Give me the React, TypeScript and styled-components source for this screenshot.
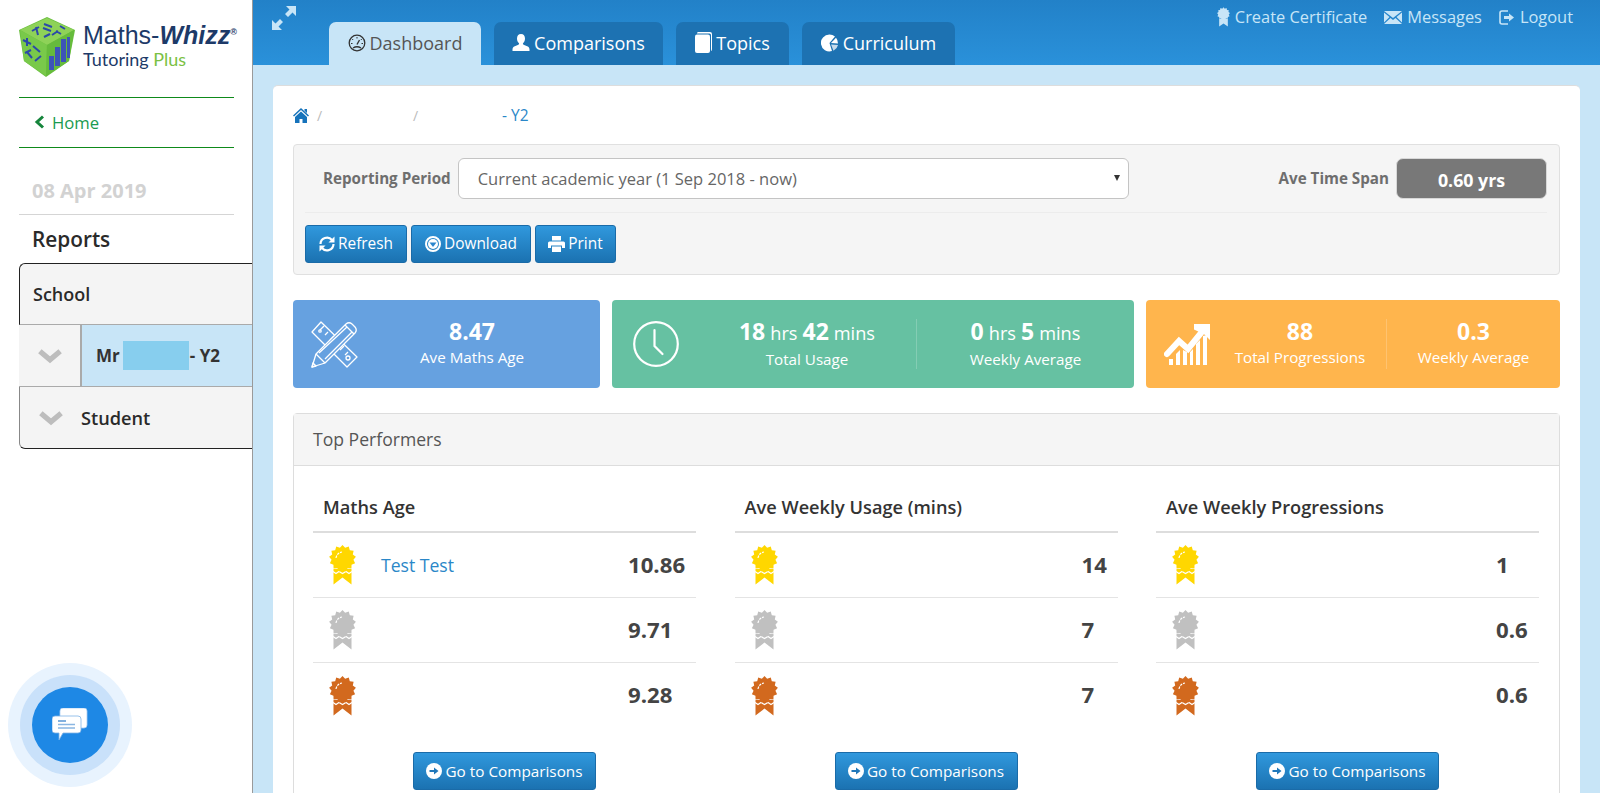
import React from "react";
import styled, { createGlobalStyle } from "styled-components";

const Global = createGlobalStyle`
  html, body { margin: 0; padding: 0; height: 100%; overflow: hidden; background: #fff; }
  body { font-family: "Open Sans", "Liberation Sans", sans-serif; color: #444; }
  #root { height: 100%; }
  * { box-sizing: border-box; }
  svg { flex: none; }
`;

const Page = styled.div`display: flex; height: 793px; overflow: hidden; position: relative;`;

/* ---------- Sidebar ---------- */
const Sidebar = styled.aside`width: 253px; flex: none; border-right: 1px solid #9a9a9a; padding: 17px 0 0 19px; background: #fff;`;
const LogoRow = styled.div`display: flex; gap: 8px; height: 80px;`;
const LogoText = styled.div`display: flex; flex-direction: column; padding-top: 4px;`;
const LogoName = styled.div`font-family: "Liberation Sans", sans-serif; font-size: 25px; line-height: 28px; color: #1d3a68; white-space: nowrap; sup { font-size: 9px; vertical-align: 9px; line-height: 0; font-weight: 700; }`;
const LogoWhizz = styled.b`font-style: italic; font-weight: 700;`;
const LogoSub = styled.div`font-family: "Lato", sans-serif; font-size: 18px; line-height: 20px; font-weight: 400; color: #1d3a68; span { color: #7ac143; }`;
const HomeLink = styled.div`width: 215px; height: 51px; border-top: 1px solid #0e8a1a; border-bottom: 1px solid #0e8a1a; display: flex; align-items: center; gap: 7px; padding: 0 0 1px 15px; color: #1a9a50; font-size: 16.7px;`;
const DateText = styled.div`width: 215px; height: 67px; padding: 30px 0 0 13px; font-size: 20px; line-height: 26px; font-weight: 700; color: #d2d2d2; border-bottom: 1.5px solid #d5d5d5;`;
const ReportsTitle = styled.div`height: 48px; padding: 11px 0 0 13px; font-size: 20.8px; line-height: 26px; font-weight: 600; color: #2a2a2a;`;
const TreeHead = styled.div`height: 62px; background: #f4f4f4; border: 1px solid #222; border-right: 0; border-bottom: 1px solid #aaa; border-radius: 6px 0 0 0; padding: 0 0 0 13px; display: flex; align-items: center; font-size: 18px; font-weight: 600; color: #2a2a2a;`;
const TreeRow = styled.div`height: 62px; display: flex; background: #c8e5f7;`;
const ChevCell = styled.div`width: 63px; flex: none; background: #f4f4f4; border-right: 2px solid #aaa; border-bottom: 1px solid #aaa; display: flex; align-items: center; justify-content: center;`;
const TreeLabel = styled.div`flex: 1; display: flex; align-items: center; padding-left: 14px; font-size: 17px; font-weight: 700; color: #333; border-bottom: 1px solid #aaa;`;
const Redact = styled.span`display: inline-block; width: 66px; height: 29px; margin: 0 1px 0 3px; background: #87ceee;`;
const TreeFoot = styled.div`height: 62px; background: #f4f4f4; border-left: 1px solid #888; border-bottom: 1px solid #222; border-radius: 0 0 0 6px; display: flex; align-items: center; gap: 17px; padding-left: 18px; font-size: 18.2px; font-weight: 600; color: #2a2a2a;`;

const ChatOuter = styled.div`position: absolute; left: 8px; top: 663px; width: 124px; height: 124px; border-radius: 50%; background: #e8f3fe; display: flex; align-items: center; justify-content: center;`;
const ChatMid = styled.div`width: 100px; height: 100px; border-radius: 50%; background: #c9e1fa; display: flex; align-items: center; justify-content: center;`;
const ChatInner = styled.div`width: 76px; height: 76px; border-radius: 50%; background: #1e88e5; display: flex; align-items: center; justify-content: center;`;

/* ---------- Main ---------- */
const Main = styled.main`flex: 1; min-width: 0; background: #c8e5f7; display: flex; flex-direction: column;`;
const Header = styled.header`height: 65px; flex: none; background: linear-gradient(#2281c8, #2a91da); display: flex; padding-left: 19px;`;
const ExpandBox = styled.div`width: 57px; flex: none; padding-top: 6px;`;
const Tabs = styled.nav`display: flex; align-items: flex-end; gap: 13px; height: 65px;`;
const Tab = styled.div<{ $active?: boolean; $w: number }>`
  width: ${p => p.$w}px; height: 43px; border-radius: 7px 7px 0 0; display: flex; align-items: center; justify-content: center; gap: 4px;
  font-size: 18px; padding-bottom: 2px;
  background: ${p => (p.$active ? "#c8e5f7" : "#1d72b2")};
  color: ${p => (p.$active ? "#555" : "#fff")};
`;
const TopLinks = styled.div`margin-left: auto; display: flex; gap: 17px; padding: 6px 27px 0 0; color: #c8e5f7; font-size: 16.4px; line-height: 22px;`;
const TopLink = styled.span`display: flex; align-items: center; gap: 5px; white-space: nowrap; height: 22px;`;

const Card = styled.section`margin: 20px 20px 0 20px; background: #fff; border-radius: 5px 5px 0 0; border-top: 1px solid #ddd; padding: 0 20px; flex: 1;`;
const Crumbs = styled.div`height: 58px; display: flex; align-items: center; font-size: 15.500px; color: #2a87c8;`;
const CrumbSep = styled.span<{ $w: number; $ml?: number }>`color: #bbb; width: ${p => p.$w}px; margin-left: ${p => p.$ml ?? 0}px; font-size: 14px;`;

const Well = styled.div`height: 131px; background: #f5f5f5; border: 1.5px solid #e0e0e0; border-radius: 4px; padding: 13px 12px 0 11px;`;
const WellTop = styled.div`display: flex; align-items: center; height: 41px; padding-left: 18px;`;
const FieldLabel = styled.span`font-size: 15.2px; font-weight: 700; color: #6e6e6e; white-space: nowrap; padding-bottom: 1px;`;
const SelectWrap = styled.div`position: relative; width: 671px; margin-left: 7px; height: 41px;`;
const Select = styled.select`width: 100%; height: 100%; appearance: none; border: 1.5px solid #c4c4c4; border-radius: 6px; background: #fff; padding: 0 0 0 19px; font-family: inherit; font-size: 16.5px; color: #666;`;
const Caret = styled.span`position: absolute; right: 9px; top: 17px; width: 0; height: 0; border-left: 3.5px solid transparent; border-right: 3.5px solid transparent; border-top: 6px solid #333;`;
const SpanLabel = styled(FieldLabel)`margin-left: auto; margin-right: 7px;`;
const Pill = styled.div`width: 151px; height: 41px; border-radius: 7px; background: #787878; border: 1.5px solid #d8d8d8; padding-top: 2px; color: #fff; font-size: 17.8px; font-weight: 700; display: flex; align-items: center; justify-content: center;`;
const Rule = styled.div`height: 1px; background: #ececec; margin: 13px 0 12px;`;
const Btns = styled.div`display: flex; gap: 4px;`;
const Btn = styled.div<{ $w: number }>`
  width: ${p => p.$w}px; height: 38px; border-radius: 3px; border: 1px solid #1a6ba8; padding-bottom: 1px;
  background: linear-gradient(#3098dd, #1b72b1); color: #fff; font-size: 15.4px;
  display: flex; align-items: center; justify-content: center; gap: 3px;
`;

const Stats = styled.div`display: flex; gap: 12px; margin-top: 25px; height: 88px;`;
const Stat = styled.div<{ $bg: string; $w: number; $iconW: number }>`
  width: ${p => p.$w}px; flex: none; background: ${p => p.$bg}; border-radius: 4px; color: #fff; display: grid;
  grid-template-columns: ${p => p.$iconW}px 1fr; align-items: center;
`;
const StatIcon = styled.div<{ $pad: number }>`padding-left: ${p => p.$pad}px; display: flex; align-items: center;`;
const StatCells = styled.div`display: flex; align-items: center; height: 50px;`;
const StatCell = styled.div<{ $w?: number }>`
  flex: ${p => (p.$w ? `0 0 ${p.$w}px` : 1)}; text-align: center; height: 50px;
  & + & { border-left: 1px solid rgba(255,255,255,.2); }
`;
const StatNum = styled.div`font-size: 23px; line-height: 28px; margin: -2px 0 2px; font-weight: 700; white-space: nowrap; word-spacing: -1px; small { font-size: 18.2px; font-weight: 400; }`;
const StatLabel = styled.div`font-size: 15.2px; line-height: 21px; white-space: nowrap;`;

const Panel = styled.div`margin-top: 25px; border: 1px solid #ddd; border-radius: 4px 4px 0 0; height: 420px;`;
const PanelHead = styled.div`height: 52px; background: #f5f5f5; border-bottom: 1px solid #ddd; padding: 0 0 1px 19px; display: flex; align-items: center; font-size: 17.6px; color: #555;`;
const Columns = styled.div`display: grid; grid-template-columns: repeat(3, 383px); column-gap: 38.5px; padding: 25px 0 0 19px;`;
const Col = styled.div``;
const ColTitle = styled.div`height: 42px; border-bottom: 2px solid #ddd; padding: 3px 0 0 10px; font-size: 18.2px; line-height: 26px; font-weight: 600; color: #333; white-space: nowrap;`;
const Row = styled.div`height: 65px; display: flex; align-items: center; border-bottom: 1px solid #e4e4e4; padding-left: 16px; &:nth-child(4) { border-bottom: 0; }`;
const RowName = styled.span`flex: 1; padding-left: 25px; font-size: 17.6px; color: #2a87c8;`;
const RowValue = styled.span<{ $w: number }>`width: ${p => p.$w}px; margin-right: 11px; padding-bottom: 2px; font-size: 22.2px; font-weight: 700; color: #444; white-space: nowrap;`;
const GoWrap = styled.div`display: flex; justify-content: center; padding-top: 24px;`;
const GoBtn = styled(Btn)`font-size: 15.3px;`;

/* ---------- Icons ---------- */
const CubeLogo = () => (
  <svg width="56" height="60" viewBox="0 0 56 60">
    <path d="M28 0 56 13 50 44 27 60 5 44 0 13Z" fill="#6abf3f" />
    <path d="M28 1 55 13 28 28 1 13Z" fill="#8ed258" />
    <path d="M1 13 28 28 27 59 5 44Z" fill="#79c94a" />
    <path d="M55 13 28 28 27 59 50 44Z" fill="#66bb3c" />
    <g stroke="#2c4aa8" strokeWidth="2" fill="none">
      <path d="M13 14l7-4M17 10l2 8M25 7l8 3M24 11l8 3M33 18l6-4M37 14l5 3M41 9l5 3M25 20l6-3" />
      <path d="M4 23l8 4M8 21v8M14 29l7 6M6 36l6-3M8 35l5 6M16 44l6-5" />
    </g>
    <g fill="#3d55b8">
      <rect x="30" y="39" width="5" height="14" />
      <rect x="36" y="30" width="5" height="19" />
      <rect x="42" y="22" width="5" height="23" />
      <rect x="48" y="20" width="3" height="21" />
    </g>
  </svg>
);
const ChevLeft = () => (
  <svg width="11" height="14" viewBox="0 0 11 14"><path d="M9 1.500 3 7l6 5.500" fill="none" stroke="#16853c" strokeWidth="3" /></svg>
);
const ChevDown = () => (
  <svg width="26" height="16" viewBox="0 0 24 15"><path d="M2.500 3 12 11l9.500-8" fill="none" stroke="#bdbdbd" strokeWidth="5" /></svg>
);
const Chat = () => (
  <svg width="36" height="34" viewBox="0 0 36 34">
    <path d="M8 3q0-3 3-3h21q3 0 3 3v14q0 3-3 3H8Z" fill="#fff" stroke="#a9cdf2" strokeWidth=".8" />
    <path d="M3 8h23q3 0 3 3v11q0 3-3 3H11l-4 7v-7H3q-3 0-3-3V11q0-3 3-3Z" fill="#fff" stroke="#7fb2e6" strokeWidth=".8" />
    <path d="M6 13h8" stroke="#4c8fd0" strokeWidth="1.400" />
    <path d="M6 16.500h17M6 20h17" stroke="#8ab6e2" strokeWidth="1.400" />
  </svg>
);
const Expand = () => (
  <svg width="24" height="24" viewBox="0 0 24 24" fill="#c8e5f7">
    <path d="M14 0h10v10l-3.500-3.500L16 11l-3-3 4.500-4.500Z" />
    <path d="M0 24V14l3.500 3.500L8 13l3 3-4.500 4.500L10 24Z" />
  </svg>
);
const Gauge = () => (
  <svg width="18" height="18" viewBox="0 0 18 18" fill="none" stroke="#333">
    <circle cx="9" cy="9" r="7.800" strokeWidth="1.300" />
    <path d="M9 3v1.500M4.200 5l1 1M13.800 5l-1 1M3 9.500h1.500M15 9.500h-1.500" strokeWidth="1" />
    <path d="M9 10.500 11.500 6" strokeWidth="1.400" />
    <path d="M5 14q4-2.500 8 0" strokeWidth="1.300" />
  </svg>
);
const User = () => (
  <svg width="18" height="18" viewBox="0 0 18 18" fill="#fff">
    <path d="M9 0c2.700 0 4 1.800 4 4.500 0 2-.8 3.500-1.800 4.600-.5.600-.3 1.300.4 1.600l3.600 1.600c1.600.7 2.300 1.700 2.300 3.200V17H.5v-1.500c0-1.500.7-2.500 2.300-3.200l3.600-1.600c.7-.3.900-1 .4-1.600C5.800 8 5 6.500 5 4.500 5 1.800 6.300 0 9 0Z" />
  </svg>
);
const Book = () => (
  <svg width="17" height="21" viewBox="0 0 17 21">
    <path d="M3 0h12q2 0 2 2v15q0 2-1 2V3q0-1.500-1.500-1.500H2Q2 0 3 0Z" fill="#fff" />
    <path d="M2 2.500h11q2 0 2 2V19q0 2-2 2H2q-2 0-2-2V4.500q0-2 2-2Z" fill="#fff" />
  </svg>
);
const Pie = () => (
  <svg width="18" height="18" viewBox="0 0 18 18" fill="#fff">
    <path d="M8.500.5A8.500 8.500 0 1 0 11 17.100L8.500 9l5.500-6.500A8.500 8.500 0 0 0 8.500.5Z" />
    <path d="M15 3.800A8.500 8.500 0 0 1 17 9.500L10 9Z" />
    <path d="M17 11A8.500 8.500 0 0 1 12.500 16.700L10 10.500Z" opacity=".75" />
  </svg>
);
const sealPath = (cx: number, cy: number, ro: number, ri: number, n: number) => {
  const pts: string[] = [];
  for (let i = 0; i < n * 2; i++) {
    const r = i % 2 ? ri : ro;
    const a = (Math.PI * i) / n - Math.PI / 2;
    pts.push(`${(cx + r * Math.cos(a)).toFixed(2)} ${(cy + r * Math.sin(a)).toFixed(2)}`);
  }
  return `M${pts.join("L")}Z`;
};
const Medal = ({ color }: { color: string }) => (
  <svg width="27" height="40" viewBox="0 0 27 40">
    <path d="M4.500 24H22.500V39.500L13.500 32.500 4.500 39.500Z" fill={color} />
    <path d="M4 26.500l3 2 3-2 3.500 2 3.500-2 3 2 3-2" fill="none" stroke="#fff" strokeWidth="1.200" />
    <path d={sealPath(13.5, 13.5, 13.5, 11, 13)} fill={color} />
    <path d="M7 13q1-5 6-6" fill="none" stroke="#fff" strokeWidth="1.200" strokeDasharray="2.500 1" />
  </svg>
);
const CertIcon = () => (
  <svg width="13" height="20" viewBox="0 0 27 40"><path d="M4.500 24H22.500V39.500L13.500 33.500 4.500 39.500Z" fill="#c8e5f7" /><path d={sealPath(13.5, 13.5, 13.5, 11, 13)} fill="#c8e5f7" /></svg>
);
const Mail = () => (
  <svg width="18" height="13" viewBox="0 0 18 13" fill="#c8e5f7">
    <path d="M0 0h18L9 7Z" /><path d="M0 1.500 5.500 6 0 11.500ZM18 1.500 12.500 6 18 11.500ZM6.500 7 9 9l2.500-2L18 13H0Z" />
  </svg>
);
const Logout = () => (
  <svg width="16" height="15" viewBox="0 0 16 15" fill="none" stroke="#c8e5f7" strokeWidth="1.600">
    <path d="M9 1H3Q1 1 1 3v9q0 2 2 2h6" />
    <path d="M5 6h5V3.500L15 7.500l-5 4V9H5Z" fill="#c8e5f7" stroke="none" />
  </svg>
);
const Home = () => (
  <svg width="16" height="15" viewBox="0 0 16 15" fill="#1673bb">
    <path d="M8 0 16 7.500l-1 1L8 2 1 8.500l-1-1ZM11.500 1H14v4l-2.500-2.300Z" />
    <path d="M8 3.500 14 9v6H9.500v-4h-3v4H2V9Z" />
  </svg>
);
const Refresh = () => (
  <svg width="16" height="16" viewBox="0 0 16 16" fill="none" stroke="#fff" strokeWidth="2.200">
    <path d="M1.500 8A6.500 6.500 0 0 1 13 4" /><path d="M14.500 8A6.500 6.500 0 0 1 3 12" />
    <path d="M15.500 0.500V6.500H9.500Z" fill="#fff" stroke="none" /><path d="M.5 15.500V9.500H6.500Z" fill="#fff" stroke="none" />
  </svg>
);
const DownloadIcon = () => (
  <svg width="16" height="16" viewBox="0 0 16 16">
    <circle cx="8" cy="8" r="7" fill="none" stroke="#fff" strokeWidth="2" />
    <circle cx="8" cy="8" r="5" fill="#fff" />
    <path d="M4.500 6.500h7L8 11Z" fill="#2a85cc" />
  </svg>
);
const PrintIcon = () => (
  <svg width="17" height="16" viewBox="0 0 17 16" fill="#fff">
    <path d="M4 0h9v4.500H4Z" /><path d="M1.500 5.500h14q1.500 0 1.500 1.500v5h-3V9.500H3V12H0V7q0-1.500 1.500-1.500Z" /><path d="M4 10.500h9V16H4Z" />
  </svg>
);
const ArrowCircle = () => (
  <svg width="16" height="16" viewBox="0 0 16 16">
    <circle cx="8" cy="8" r="8" fill="#fff" />
    <path d="M3.500 7h4.500V4.500L12.500 8 8 11.500V9H3.500Z" fill="#2078ba" />
  </svg>
);
const PencilRuler = () => (
  <svg width="47" height="47" viewBox="0 0 47 47" fill="none" stroke="#fff" strokeWidth="1.300" strokeLinejoin="round">
    <path d="M10 1 46 36 36 46 1 11Z" />
    <path d="M9 9l4-4M14 14l3-3M19 19l4-4M29 29l4-4M34 34l3-3" />
    <circle cx="37" cy="37" r="2" />
    <circle cx="9" cy="10" r="1.200" />
    <path d="M1 46 5 33 35 3q3-2.500 6 0l3 3q2.500 3 0 6L14 42Z" fill="#66a1e0" />
    <path d="M5 33 14 42M8 32 36 6M14 38 41 11M34 4l9 9M1 46l4-1-3-3Z" />
  </svg>
);
const Clock = () => (
  <svg width="46" height="46" viewBox="0 0 46 46" fill="none" stroke="#fff" strokeWidth="2.200" strokeLinecap="round">
    <circle cx="23" cy="23" r="21.800" />
    <path d="M21.500 9v16l8 8" />
  </svg>
);
const Growth = () => (
  <svg width="46" height="42" viewBox="0 0 46 42" fill="#fff">
    <path d="M3 31 15 18l9 8L37 10" fill="none" stroke="#fff" strokeWidth="6" strokeLinecap="round" />
    <path d="M30 1h16v16l-5.500-5.500-10.500-5Z" />
    <path d="M5 36h4v6H5ZM12 31l4-4v15h-4ZM19 27l4 2v13h-4ZM26 29l3-3v16h-3ZM32 21l4-4v25h-4ZM39 13l4-1v30h-4Z" />
  </svg>
);

const medals = ["#ffd700", "#c0c0c0", "#d2691e"];
const columns = [
  { title: "Maths Age", w: 57, vals: ["10.86", "9.71", "9.28"], name: "Test Test" },
  { title: "Ave Weekly Usage (mins)", w: 25, vals: ["14", "7", "7"], name: "" },
  { title: "Ave Weekly Progressions", w: 32, vals: ["1", "0.6", "0.6"], name: "" },
];

export default function App() {
  return (
    <Page>
      <Global />
      <Sidebar>
        <LogoRow>
          <CubeLogo />
          <LogoText>
            <LogoName>Maths-<LogoWhizz>Whizz</LogoWhizz><sup>®</sup></LogoName>
            <LogoSub>Tutoring <span>Plus</span></LogoSub>
          </LogoText>
        </LogoRow>
        <HomeLink><ChevLeft />Home</HomeLink>
        <DateText>08 Apr 2019</DateText>
        <ReportsTitle>Reports</ReportsTitle>
        <TreeHead>School</TreeHead>
        <TreeRow>
          <ChevCell><ChevDown /></ChevCell>
          <TreeLabel>Mr<Redact />- Y2</TreeLabel>
        </TreeRow>
        <TreeFoot><ChevDown />Student</TreeFoot>
      </Sidebar>
      <ChatOuter><ChatMid><ChatInner><Chat /></ChatInner></ChatMid></ChatOuter>
      <Main>
        <Header>
          <ExpandBox><Expand /></ExpandBox>
          <Tabs>
            <Tab $active $w={152}><Gauge />Dashboard</Tab>
            <Tab $w={169}><User />Comparisons</Tab>
            <Tab $w={113}><Book />Topics</Tab>
            <Tab $w={153}><Pie />Curriculum</Tab>
          </Tabs>
          <TopLinks>
            <TopLink><CertIcon />Create Certificate</TopLink>
            <TopLink><Mail />Messages</TopLink>
            <TopLink><Logout />Logout</TopLink>
          </TopLinks>
        </Header>
        <Card>
          <Crumbs>
            <Home />
            <CrumbSep $w={96} $ml={8}>/</CrumbSep>
            <CrumbSep $w={89}>/</CrumbSep>
            <span>- Y2</span>
          </Crumbs>
          <Well>
            <WellTop>
              <FieldLabel>Reporting Period</FieldLabel>
              <SelectWrap>
                <Select defaultValue="a"><option value="a">Current academic year (1 Sep 2018 - now)</option></Select>
                <Caret />
              </SelectWrap>
              <SpanLabel>Ave Time Span</SpanLabel>
              <Pill>0.60 yrs</Pill>
            </WellTop>
            <Rule />
            <Btns>
              <Btn $w={102}><Refresh />Refresh</Btn>
              <Btn $w={120}><DownloadIcon />Download</Btn>
              <Btn $w={81}><PrintIcon />Print</Btn>
            </Btns>
          </Well>
          <Stats>
            <Stat $bg="#66a1e0" $w={307} $iconW={51}>
              <StatIcon $pad={18}><PencilRuler /></StatIcon>
              <StatCells>
                <StatCell><StatNum>8.47</StatNum><StatLabel>Ave Maths Age</StatLabel></StatCell>
              </StatCells>
            </Stat>
            <Stat $bg="#66c1a2" $w={522} $iconW={86}>
              <StatIcon $pad={21}><Clock /></StatIcon>
              <StatCells>
                <StatCell $w={218}><StatNum>18 <small>hrs</small> 42 <small>mins</small></StatNum><StatLabel>Total Usage</StatLabel></StatCell>
                <StatCell><StatNum>0 <small>hrs</small> 5 <small>mins</small></StatNum><StatLabel>Weekly Average</StatLabel></StatCell>
              </StatCells>
            </Stat>
            <Stat $bg="#ffb54d" $w={414} $iconW={68}>
              <StatIcon $pad={18}><Growth /></StatIcon>
              <StatCells>
                <StatCell $w={172}><StatNum>88</StatNum><StatLabel>Total Progressions</StatLabel></StatCell>
                <StatCell><StatNum>0.3</StatNum><StatLabel>Weekly Average</StatLabel></StatCell>
              </StatCells>
            </Stat>
          </Stats>
          <Panel>
            <PanelHead>Top Performers</PanelHead>
            <Columns>
              {columns.map(c => (
                <Col key={c.title}>
                  <ColTitle>{c.title}</ColTitle>
                  {c.vals.map((v, i) => (
                    <Row key={i}>
                      <Medal color={medals[i]} />
                      <RowName>{i === 0 ? c.name : ""}</RowName>
                      <RowValue $w={c.w}>{v}</RowValue>
                    </Row>
                  ))}
                  <GoWrap><GoBtn $w={183}><ArrowCircle />Go to Comparisons</GoBtn></GoWrap>
                </Col>
              ))}
            </Columns>
          </Panel>
        </Card>
      </Main>
    </Page>
  );
}
